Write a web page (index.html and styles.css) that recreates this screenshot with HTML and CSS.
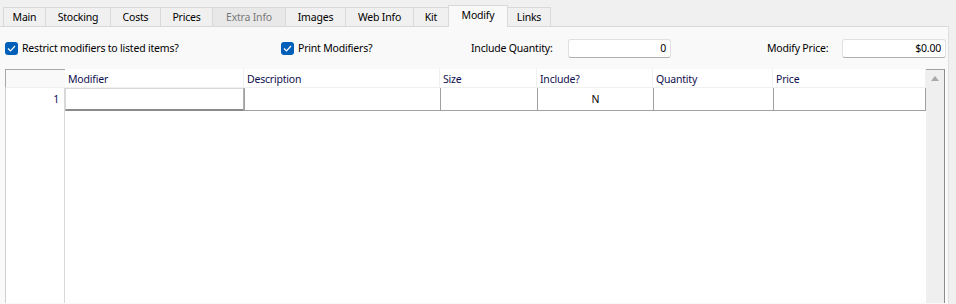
FILE: index.html
```html
<!DOCTYPE html>
<html>
<head>
  <title>Item - Modify</title>
  <link rel="stylesheet" href="styles.css">
</head>
<body>
  <!-- tab strip -->
  <nav class="tabs">
    <span class="tab w-main">Main</span>
    <span class="tab w-stock">Stocking</span>
    <span class="tab w-costs">Costs</span>
    <span class="tab w-prices">Prices</span>
    <span class="tab w-extra disabled">Extra Info</span>
    <span class="tab w-images">Images</span>
    <span class="tab w-web">Web Info</span>
    <span class="tab w-kit">Kit</span>
    <span class="tab w-modify active">Modify</span>
    <span class="tab w-links">Links</span>
  </nav>

  <section class="panel">
    <div class="options">
      <label class="check opt-restrict"><span class="box"><svg width="9" height="7" viewBox="0 0 9 7"><path d="M1 3.5 L3.5 6 L8 1" fill="none" stroke="#fff" stroke-width="1.2"/></svg></span>Restrict modifiers to listed items?</label>
      <label class="check opt-print"><span class="box"><svg width="9" height="7" viewBox="0 0 9 7"><path d="M1 3.5 L3.5 6 L8 1" fill="none" stroke="#fff" stroke-width="1.2"/></svg></span>Print Modifiers?</label>
      <span class="field opt-qty"><span class="lbl">Include Quantity:</span><span class="input qty">0</span></span>
      <span class="field opt-price"><span class="lbl">Modify Price:</span><span class="input price">$0.00</span></span>
    </div>

    <div class="grid">
      <div class="rowhead">
        <div class="corner"></div>
        <div class="rownum">1</div>
      </div>
      <div class="cols">
        <div class="hdr">
          <span class="c1">Modifier</span>
          <span class="c2">Description</span>
          <span class="c3">Size</span>
          <span class="c4">Include?</span>
          <span class="c5">Quantity</span>
          <span class="c6">Price</span>
        </div>
        <div class="row">
          <span class="c1 focus"></span>
          <span class="c2"></span>
          <span class="c3"></span>
          <span class="c4 mid">N</span>
          <span class="c5"></span>
          <span class="c6"></span>
        </div>
      </div>
      <div class="scroll"><span class="arrow"></span></div>
    </div>
  </section>
</body>
</html>
```

FILE: styles.css
```css
body {
  margin: 0;
  background-color: #f0f0f0;
  font-family: "Noto Sans", "Open Sans", sans-serif;
  font-size: 10.5px;
  letter-spacing: -0.2px;
  color: #000;
  width: 956px;
  height: 304px;
  overflow: hidden;
}

.tabs {
  display: flex;
  align-items: flex-end;
  height: 26px;
  padding-left: 3px;
  box-sizing: border-box;
}

.tab {
  box-sizing: border-box;
  height: 19px;
  line-height: 18px;
  text-align: center;
  background-color: #f0f0f0;
  border: 1px solid #d9d9d9;
  border-bottom: none;
  margin-right: -1px;
}

.tab.disabled {
  background-color: #e8e8e8;
  color: #7a7a7a;
}

.tab.active {
  height: 22px;
  line-height: 19px;
  background-color: #f9f9f9;
  position: relative;
  margin-bottom: -1px;
}

.w-main { width: 43px; }
.w-stock { width: 66px; }
.w-costs { width: 51px; }
.w-prices { width: 53px; }
.w-extra { width: 74px; }
.w-images { width: 61px; }
.w-web { width: 69px; }
.w-kit { width: 36px; }
.w-modify { width: 60px; }
.w-links { width: 44px; }

.panel {
  background-color: #f9f9f9;
  border-top: 1px solid #d9d9d9;
  height: 278px;
  width: 949px;
  border-right: 1px solid #e0e0e0;
  box-sizing: border-box;
}

.options {
  display: flex;
  align-items: center;
  height: 42px;
  padding-left: 5px;
}

.check {
  display: flex;
  align-items: center;
  gap: 4px;
}

.box {
  width: 13px;
  height: 13px;
  border-radius: 3px;
  background-color: #005fb8;
  display: flex;
  align-items: center;
  justify-content: center;
}

.opt-restrict { width: 276px; }
.opt-print { width: 190px; }

.field {
  display: flex;
  align-items: center;
}

.opt-qty .lbl { width: 97px; }
.opt-price { margin-left: 96px; }
.opt-price .lbl { width: 75px; }

.input {
  box-sizing: border-box;
  height: 19px;
  line-height: 17px;
  background-color: #fff;
  border: 1px solid #e0e0e0;
  border-bottom-color: #b0b0b0;
  border-radius: 3px;
  text-align: right;
  padding-right: 4px;
}

.qty { width: 103px; }
.price { width: 104px; }

.grid {
  display: flex;
  margin-left: 5px;
  width: 941px;
  height: 234px;
  background-color: #fff;
}

.rowhead {
  width: 60px;
  border-left: 1px solid #cfcfcf;
  border-right: 1px solid #d8d8d8;
  box-sizing: border-box;
}

.corner {
  height: 19px;
  box-sizing: border-box;
  border-top: 1px solid #a8a8a8;
  border-bottom: 1px solid #f0f0f0;
  margin-left: -1px;
  margin-right: -1px;
  background-color: #f9f9f9;
  border-left: 1px solid #a8a8a8;
}

.rownum {
  height: 22px;
  line-height: 22px;
  text-align: right;
  padding-right: 5px;
  color: #101060;
}

.cols {
  width: 861px;
}

.hdr, .row {
  display: flex;
}

.hdr span {
  box-sizing: border-box;
  height: 19px;
  line-height: 20px;
  padding-left: 3px;
  color: #101050;
  border-right: 1px solid #f0f0f0;
  border-bottom: 1px solid #f0f0f0;
}

.row span {
  box-sizing: border-box;
  height: 23px;
  line-height: 22px;
  border-left: 1px solid #a0a0a0;
  border-bottom: 1px solid #a0a0a0;
}

.row span.c6 { border-right: 1px solid #a0a0a0; }

.row .focus {
  border: 1px solid #d8d8d8;
  border-bottom: 2px solid #8a8a8a;
  border-right: 1px solid #b0b0b0;
  box-shadow: inset 1px 1px 0 #fff;
}

.mid { text-align: center; }

.c1 { width: 179px; }
.c2 { width: 196px; }
.c3 { width: 97px; }
.c4 { width: 116px; }
.c5 { width: 120px; }
.c6 { width: 153px; }

.scroll {
  width: 19px;
  background-color: #efefef;
  border-top: 1px solid #a0a0a0;
  border-right: 1px solid #8a8a8a;
  box-sizing: border-box;
  display: flex;
  justify-content: center;
}

.arrow {
  margin-top: 6px;
  width: 0;
  height: 0;
  border-left: 4px solid transparent;
  border-right: 4px solid transparent;
  border-bottom: 5px solid #a8a8a8;
}
```
